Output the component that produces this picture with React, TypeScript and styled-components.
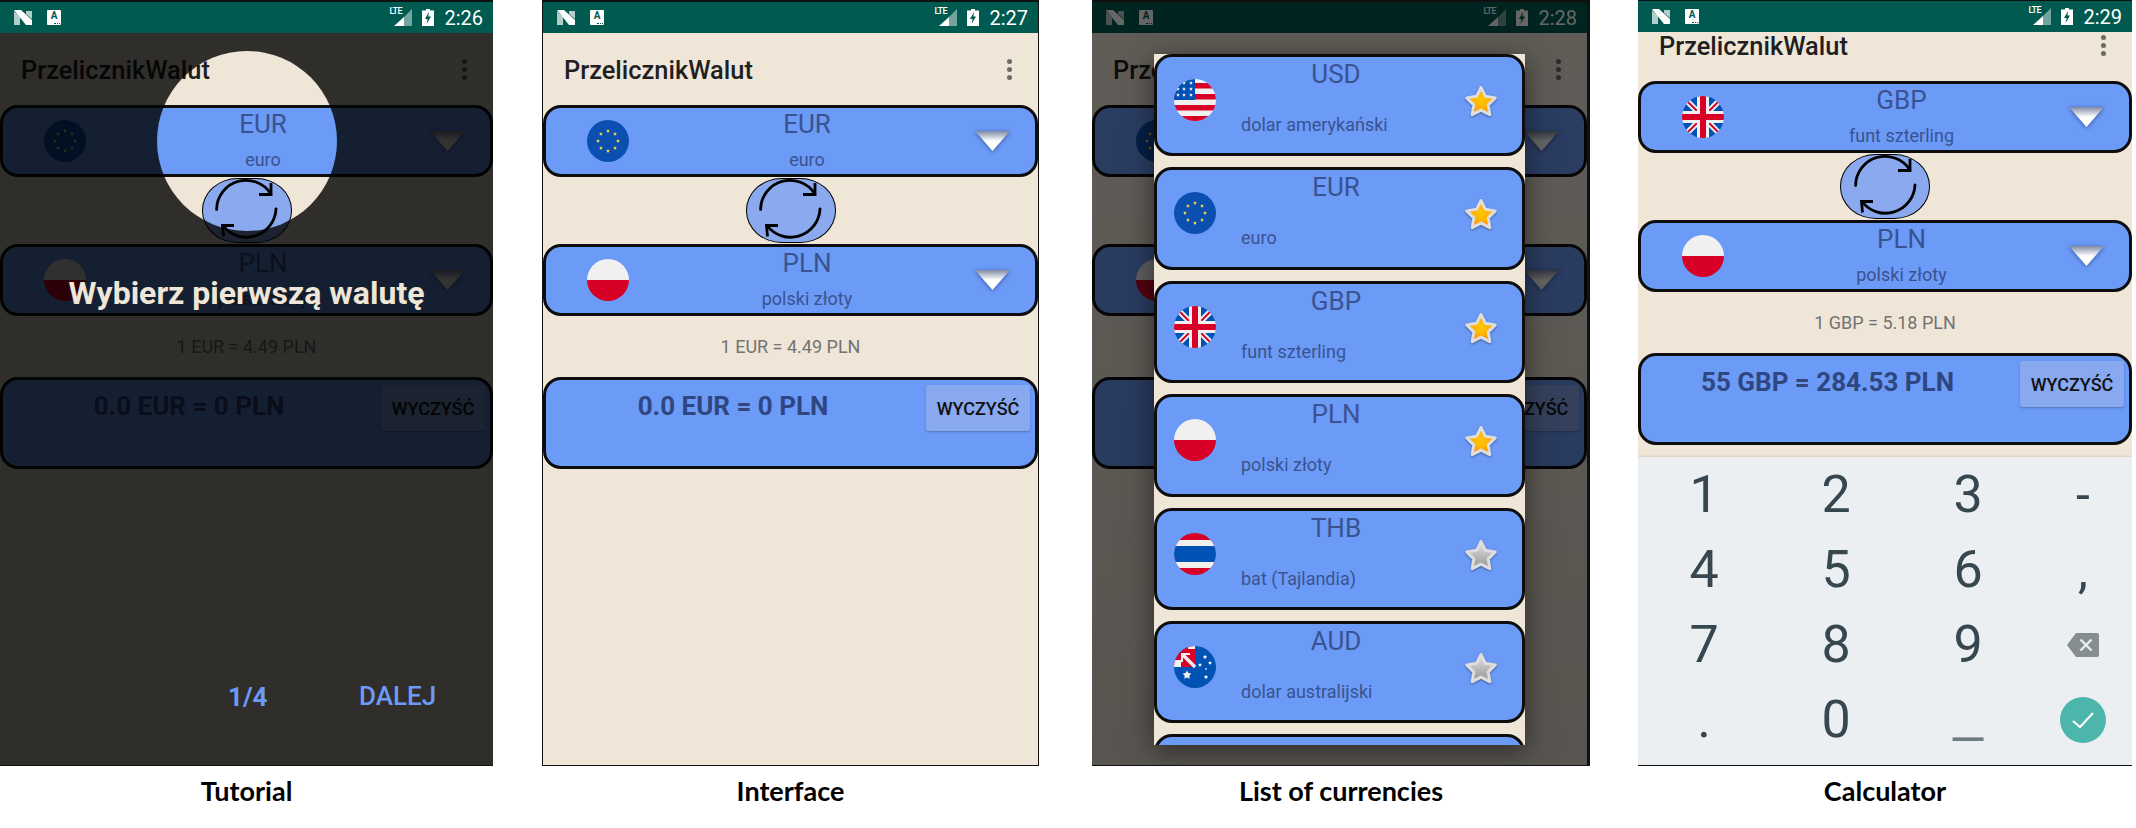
import React, { FC } from 'react';
import styled, { createGlobalStyle } from 'styled-components';

const BLUE = '#6b9af7';
const SAND = '#efe6d8';
const BAR = '#005a4f';
const INK = '#3a5390';

const GlobalStyle = createGlobalStyle`
  html, body {
    margin: 0;
    padding: 0;
    background: #fff;
  }
  * {
    box-sizing: border-box;
  }
`;

type FlagCode = 'EU' | 'PL' | 'GB' | 'US' | 'TH' | 'AU';

const starPoints = (cx: number, cy: number, outer: number, inner: number) =>
  Array.from({ length: 10 }, (_, i) => {
    const r = i % 2 ? inner : outer;
    const a = (Math.PI / 5) * i - Math.PI / 2;
    return `${(cx + r * Math.cos(a)).toFixed(2)},${(cy + r * Math.sin(a)).toFixed(2)}`;
  }).join(' ');

const FlagArt: FC<{ code: FlagCode }> = ({ code }) => {
  if (code === 'EU') {
    return (
      <svg viewBox="0 0 42 42" width="42" height="42">
        <rect width="42" height="42" fill="#0b4fb0" />
        {Array.from({ length: 8 }, (_, i) => {
          const a = (Math.PI / 4) * i;
          return (
            <polygon
              key={i}
              points={starPoints(21 + 10 * Math.sin(a), 21 - 10 * Math.cos(a), 2.1, 0.9)}
              fill="#ffda44"
            />
          );
        })}
      </svg>
    );
  }
  if (code === 'PL') {
    return (
      <svg viewBox="0 0 42 42" width="42" height="42">
        <rect width="42" height="21" fill="#f0f0f0" />
        <rect y="21" width="42" height="21" fill="#d80027" />
      </svg>
    );
  }
  if (code === 'GB') {
    return (
      <svg viewBox="0 0 42 42" width="42" height="42">
        <rect width="42" height="42" fill="#0052b4" />
        <path d="M4 4l34 34M38 4L4 38" stroke="#f0f0f0" strokeWidth="6" />
        <path d="M5 5l12 12M37 5L25 17M37 37L25 25M5 37l12-12" stroke="#d80027" strokeWidth="1.8" />
        <rect y="15" width="42" height="12" fill="#f0f0f0" />
        <rect x="15" width="12" height="42" fill="#f0f0f0" />
        <rect y="18" width="42" height="6" fill="#d80027" />
        <rect x="18" width="6" height="42" fill="#d80027" />
      </svg>
    );
  }
  if (code === 'US') {
    return (
      <svg viewBox="0 0 42 42" width="42" height="42">
        <rect width="42" height="42" fill="#f0f0f0" />
        {[4, 15, 26, 37].map((y) => (
          <rect key={y} y={y} width="42" height="5.5" fill="#d80027" />
        ))}
        <rect width="21" height="21" fill="#0052b4" />
        {[
          [10, 4],
          [17, 4],
          [4, 10],
          [10, 10],
          [17, 10],
          [4, 16],
          [10, 16],
          [17, 16],
        ].map(([x, y]) => (
          <polygon key={`${x}-${y}`} points={starPoints(x, y, 2, 0.9)} fill="#f0f0f0" />
        ))}
      </svg>
    );
  }
  if (code === 'TH') {
    return (
      <svg viewBox="0 0 42 42" width="42" height="42">
        <rect width="42" height="42" fill="#d80027" />
        <rect y="7" width="42" height="28" fill="#f0f0f0" />
        <rect y="13" width="42" height="16" fill="#0052b4" />
      </svg>
    );
  }
  return (
    <svg viewBox="0 0 42 42" width="42" height="42">
      <rect width="42" height="42" fill="#0052b4" />
      <rect width="21" height="21" fill="#d80027" />
      <rect y="14" width="7" height="7" fill="#f0f0f0" />
      <rect x="14" width="7" height="3" fill="#f0f0f0" />
      <path d="M9 9l12 12" stroke="#f0f0f0" strokeWidth="3.4" />
      <path d="M7 8h9M8 7v9" stroke="#f0f0f0" strokeWidth="2" />
      <polygon points={starPoints(13, 29, 4.6, 2.4)} fill="#f0f0f0" />
      {[
        [31, 11, 2.2],
        [36, 17, 2],
        [26, 19, 2],
        [32, 31, 2.2],
        [32, 23, 1.2],
      ].map(([x, y, r]) => (
        <polygon key={`${x}-${y}`} points={starPoints(x, y, r, r * 0.55)} fill="#f0f0f0" />
      ))}
    </svg>
  );
};

const NexusIcon = () => (
  <svg viewBox="0 0 18 15" width="18" height="15">
    <polygon points="0,1 6,7 6,15 0,15" fill="#fff" opacity="0.7" />
    <polygon points="0,0 7,0 18,10 18,15 12,15" fill="#fff" />
    <polygon points="12,1 18,1 18,9 12,4" fill="#fff" opacity="0.7" />
  </svg>
);

const SignalIcon = () => (
  <svg viewBox="0 0 18 17" width="18" height="17">
    <polygon points="0,17 10,17 10,8" fill="#fff" />
    <polygon points="10,8 18,0 18,17 10,17" fill="#fff" opacity="0.45" />
  </svg>
);

const BatteryIcon = () => (
  <svg viewBox="0 0 12 17" width="12" height="17">
    <path d="M4 0h4v1.5h4V17H0V1.5h4z" fill="#fff" />
    <polygon points="7,3 3,10 5.6,10 4.6,15 9,7.6 6.4,7.6" fill={BAR} />
  </svg>
);

const SwapIcon = () => (
  <SwapArt viewBox="0 0 89 65" width="89" height="65">
    <g fill="none" stroke="#000" strokeWidth="2.8">
      <path d="M14.6 31.5A29.5 29.5 0 0 1 69 16" strokeLinecap="round" />
      <path d="M69 5v11.5H57" />
      <path d="M74 31A29.5 29.5 0 0 1 21 47.5" strokeLinecap="round" />
      <path d="M32 47.5H20.5l1 11" />
    </g>
  </SwapArt>
);

const DropArrow = () => (
  <ArrowArt viewBox="0 0 37 25" width="37" height="25">
    <defs>
      <linearGradient id="arrowFill" x1="0" y1="0" x2="0" y2="1">
        <stop offset="0" stopColor="#7f8aa3" />
        <stop offset="0.5" stopColor="#fff" />
        <stop offset="1" stopColor="#fff" />
      </linearGradient>
    </defs>
    <polygon points="1,2 36,2 18.5,22" fill="url(#arrowFill)" />
  </ArrowArt>
);

const FavStar: FC<{ on?: boolean }> = ({ on }) => (
  <StarArt viewBox="0 0 36 34" width="36" height="34">
    <defs>
      <radialGradient id="starOn" cx="0.5" cy="0.45" r="0.6">
        <stop offset="0" stopColor="#ffc800" />
        <stop offset="0.55" stopColor="#ffb000" />
        <stop offset="1" stopColor="#ff6a00" />
      </radialGradient>
      <linearGradient id="starOff" x1="0" y1="0" x2="0" y2="1">
        <stop offset="0" stopColor="#e4e4e4" />
        <stop offset="1" stopColor="#949494" />
      </linearGradient>
    </defs>
    <polygon
      points={starPoints(18, 18.5, 15, 7.6)}
      fill={on ? 'url(#starOn)' : 'url(#starOff)'}
      stroke="#dedede"
      strokeWidth="3"
      strokeLinejoin="round"
    />
  </StarArt>
);

const StatusRow: FC<{ time: string }> = ({ time }) => (
  <StatusBar>
    <NexusIcon />
    <StoreIcon>A</StoreIcon>
    <StatusRight>
      <SignalWrap>
        <LteLabel>LTE</LteLabel>
        <SignalIcon />
      </SignalWrap>
      <BatteryIcon />
      <Clock>{time}</Clock>
    </StatusRight>
  </StatusBar>
);

const CurrencyCard: FC<{ flag: FlagCode; code: string; name: string }> = ({ flag, code, name }) => (
  <Card>
    <Flag>
      <FlagArt code={flag} />
    </Flag>
    <CardText>
      <Code>{code}</Code>
      <Name>{name}</Name>
    </CardText>
    <DropArrow />
  </Card>
);

type ConverterProps = {
  from: [FlagCode, string, string];
  rate: string;
  result: string;
  compact?: boolean;
};

const Converter: FC<ConverterProps> = ({ from, rate, result, compact }) => (
  <>
    <AppBar $compact={compact}>
      <Title>PrzelicznikWalut</Title>
      <Dots>
        <Dot />
        <Dot />
        <Dot />
      </Dots>
    </AppBar>
    <CurrencyCard flag={from[0]} code={from[1]} name={from[2]} />
    <SwapRow>
      <SwapButton>
        <SwapIcon />
      </SwapButton>
    </SwapRow>
    <CurrencyCard flag="PL" code="PLN" name="polski złoty" />
    <Rate>{rate}</Rate>
    <ResultCard>
      <ResultText>{result}</ResultText>
      <ClearButton>WYCZYŚĆ</ClearButton>
    </ResultCard>
  </>
);

const EUR: [FlagCode, string, string] = ['EU', 'EUR', 'euro'];
const GBP: [FlagCode, string, string] = ['GB', 'GBP', 'funt szterling'];

const currencies: { flag: FlagCode; code: string; name: string; fav: boolean }[] = [
  { flag: 'US', code: 'USD', name: 'dolar amerykański', fav: true },
  { flag: 'EU', code: 'EUR', name: 'euro', fav: true },
  { flag: 'GB', code: 'GBP', name: 'funt szterling', fav: true },
  { flag: 'PL', code: 'PLN', name: 'polski złoty', fav: true },
  { flag: 'TH', code: 'THB', name: 'bat (Tajlandia)', fav: false },
  { flag: 'AU', code: 'AUD', name: 'dolar australijski', fav: false },
];

const keys = ['1', '2', '3', '-', '4', '5', '6', ',', '7', '8', '9'];

const App: FC = () => (
  <Sheet>
    <GlobalStyle />

    <Column $left={0} $width={493}>
      <Screen>
        <StatusRow time="2:26" />
        <Body>
          <Converter from={EUR} rate="1 EUR = 4.49 PLN" result="0.0 EUR = 0 PLN" />
          <Spotlight />
          <Hint>Wybierz pierwszą walutę</Hint>
          <Pager>1/4</Pager>
          <NextLink>DALEJ</NextLink>
        </Body>
      </Screen>
      <Caption>Tutorial</Caption>
    </Column>

    <Column $left={49} $width={497}>
      <Screen $left={1} $right={1}>
        <StatusRow time="2:27" />
        <Body>
          <Converter from={EUR} rate="1 EUR = 4.49 PLN" result="0.0 EUR = 0 PLN" />
        </Body>
      </Screen>
      <Caption>Interface</Caption>
    </Column>

    <Column $left={53} $width={498}>
      <Screen $right={3}>
        <StatusRow time="2:28" />
        <Body>
          <Converter from={EUR} rate="1 EUR = 4.49 PLN" result="0.0 EUR = 0 PLN" />
        </Body>
        <Scrim />
        <Dialog>
          {currencies.map((c) => (
            <ListItem key={c.code}>
              <ListFlag>
                <FlagArt code={c.flag} />
              </ListFlag>
              <ListText>
                <ListCode>{c.code}</ListCode>
                <ListName>{c.name}</ListName>
              </ListText>
              <FavStar on={c.fav} />
            </ListItem>
          ))}
          <ListItem />
        </Dialog>
      </Screen>
      <Caption>List of currencies</Caption>
    </Column>

    <Column $left={48} $width={494}>
      <Screen $top={1}>
        <StatusRow time="2:29" />
        <Body>
          <Converter compact from={GBP} rate="1 GBP = 5.18 PLN" result="55 GBP = 284.53 PLN" />
          <Keyboard>
            {keys.map((k) => (
              <Key key={k} $size={k === '-' || k === ',' ? 50 : 52}>
                {k}
              </Key>
            ))}
            <Key>
              <svg viewBox="0 0 32 24" width="32" height="24">
                <path d="M9 0h21a2 2 0 0 1 2 2v20a2 2 0 0 1-2 2H9L0 12z" fill="#868e92" />
                <path d="M13.5 6.5l11 11M24.5 6.5l-11 11" stroke="#eceff1" strokeWidth="2.4" />
              </svg>
            </Key>
            <Key>.</Key>
            <Key>0</Key>
            <Underscore>_</Underscore>
            <Key>
              <DoneButton>
                <svg viewBox="0 0 24 20" width="24" height="20">
                  <path d="M2 11l7 6L22 3" fill="none" stroke="#fff" strokeWidth="2" />
                </svg>
              </DoneButton>
            </Key>
          </Keyboard>
        </Body>
      </Screen>
      <Caption>Calculator</Caption>
    </Column>
  </Sheet>
);

export default App;

const Sheet = styled.div`
  display: flex;
  width: 2136px;
  height: 828px;
  background: #fff;
  overflow: hidden;
  font-family: Roboto, 'Liberation Sans', sans-serif;
`;
const Column = styled.div<{ $left: number; $width: number }>`
  display: flex;
  flex-direction: column;
  flex: none;
  width: ${(p) => p.$width}px;
  margin-left: ${(p) => p.$left}px;
`;
const Screen = styled.div<{ $left?: number; $right?: number; $top?: number }>`
  position: relative;
  display: flex;
  flex-direction: column;
  height: 766px;
  overflow: hidden;
  border-style: solid;
  border-color: #111;
  border-width: ${(p) => p.$top ?? 2}px ${(p) => p.$right ?? 0}px 1px ${(p) => p.$left ?? 0}px;
`;
const Caption = styled.div`
  flex: 1;
  display: flex;
  align-items: center;
  justify-content: center;
  padding-bottom: 14px;
  font-family: Lato, 'Open Sans', sans-serif;
  font-weight: 700;
  font-size: 27px;
  color: #000;
`;
const StatusBar = styled.div`
  flex: none;
  display: flex;
  align-items: center;
  height: 31px;
  padding: 0 10px 0 14px;
  background: ${BAR};
`;
const StoreIcon = styled.div`
  position: relative;
  display: flex;
  justify-content: center;
  width: 14px;
  height: 15px;
  margin-left: 15px;
  border-radius: 1px;
  background: #fff;
  color: ${BAR};
  font-size: 10px;
  line-height: 12px;
  font-weight: 700;
  &::after {
    content: '';
    position: absolute;
    right: 1px;
    bottom: 1px;
    width: 6px;
    border-bottom: 1px dotted ${BAR};
  }
`;
const StatusRight = styled.div`
  display: flex;
  align-items: center;
  margin-left: auto;
  gap: 10px;
`;
const SignalWrap = styled.div`
  position: relative;
  display: flex;
`;
const LteLabel = styled.span`
  position: absolute;
  left: -5px;
  top: -3px;
  color: #fff;
  font-size: 9px;
  line-height: 10px;
  letter-spacing: -0.6px;
  font-weight: 500;
`;
const Clock = styled.span`
  color: #fff;
  font-size: 20px;
  line-height: 20px;
`;
const Body = styled.div`
  position: relative;
  flex: 1;
  display: flex;
  flex-direction: column;
  min-height: 0;
  overflow: hidden;
  background: ${SAND};
`;
const AppBar = styled.div<{ $compact?: boolean }>`
  flex: none;
  display: flex;
  justify-content: space-between;
  align-items: flex-start;
  height: ${(p) => (p.$compact ? 49 : 72)}px;
  padding: ${(p) => (p.$compact ? 0 : 23)}px 26px 0 21px;
`;
const Title = styled.div`
  font-size: 25.4px;
  line-height: 28px;
  font-weight: 500;
  color: #1f1f1f;
`;
const Dots = styled.div`
  display: flex;
  flex-direction: column;
  gap: 3px;
  padding-top: 3px;
`;
const Dot = styled.span`
  width: 5px;
  height: 5px;
  border-radius: 50%;
  background: #6a6a66;
`;
const Card = styled.div`
  flex: none;
  display: flex;
  align-items: center;
  height: 72px;
  padding: 0 24px 0 41px;
  border: 3px solid #0d0d0d;
  border-radius: 18px;
  background: ${BLUE};
`;
const Flag = styled.div`
  flex: none;
  width: 42px;
  height: 42px;
  border-radius: 50%;
  overflow: hidden;
  svg {
    display: block;
  }
`;
const CardText = styled.div`
  flex: 1;
  align-self: flex-start;
  display: flex;
  flex-direction: column;
  align-items: center;
  gap: 10px;
  padding: 1px 0 0 20px;
  margin-right: 9px;
  color: ${INK};
`;
const Code = styled.div`
  font-size: 26px;
  line-height: 30px;
`;
const Name = styled.div`
  font-size: 18px;
  line-height: 22px;
`;
const ArrowArt = styled.svg`
  flex: none;
  filter: drop-shadow(0 1px 2px rgba(20, 40, 100, 0.55));
`;
const SwapRow = styled.div`
  flex: none;
  display: flex;
  justify-content: center;
  align-items: center;
  height: 67px;
`;
const SwapButton = styled.div`
  width: 90px;
  height: 65px;
  border: 1px solid #000;
  border-radius: 36px / 32px;
  background: #8aa9ee;
  display: flex;
  align-items: center;
  justify-content: center;
`;
const SwapArt = styled.svg`
  flex: none;
`;
const Rate = styled.div`
  flex: none;
  height: 61px;
  display: flex;
  align-items: center;
  justify-content: center;
  font-size: 18px;
  color: #737373;
`;
const ResultCard = styled.div`
  flex: none;
  display: flex;
  align-items: flex-start;
  height: 92px;
  padding: 5px 5px 0 0;
  border: 3px solid #0d0d0d;
  border-radius: 18px;
  background: ${BLUE};
`;
const ResultText = styled.div`
  flex: 1;
  padding-right: 6px;
  text-align: center;
  font-size: 26px;
  line-height: 30px;
  font-weight: 700;
  color: #2f4680;
  margin-top: 6px;
`;
const ClearButton = styled.div`
  flex: none;
  display: flex;
  align-items: center;
  justify-content: center;
  width: 104px;
  height: 46px;
  border-radius: 2px;
  background: #88a8f0;
  box-shadow: 0 1px 2px rgba(0, 0, 0, 0.25);
  font-size: 18px;
  font-weight: 500;
  color: #111;
`;
const Spotlight = styled.div`
  position: absolute;
  left: 157px;
  top: 18px;
  width: 180px;
  height: 180px;
  border-radius: 50%;
  box-shadow: 0 0 0 1200px rgba(0, 0, 0, 0.8);
`;
const Hint = styled.div`
  position: absolute;
  left: 0;
  right: 0;
  top: 242px;
  text-align: center;
  font-size: 32px;
  line-height: 36px;
  font-weight: 700;
  color: ${SAND};
`;
const Pager = styled.div`
  position: absolute;
  left: 228px;
  top: 650px;
  font-size: 26px;
  line-height: 28px;
  font-weight: 700;
  color: ${BLUE};
`;
const NextLink = styled.div`
  position: absolute;
  left: 359px;
  top: 649px;
  font-size: 26px;
  line-height: 28px;
  font-weight: 500;
  color: ${BLUE};
`;
const Scrim = styled.div`
  position: absolute;
  inset: 0;
  background: linear-gradient(rgba(0, 0, 0, 0.6), rgba(0, 0, 0, 0.63));
`;
const Dialog = styled.div`
  position: absolute;
  left: 62px;
  top: 52px;
  width: 371px;
  height: 691px;
  display: flex;
  flex-direction: column;
  gap: 11px;
  overflow: hidden;
  background: ${SAND};
  box-shadow: 0 6px 26px rgba(0, 0, 0, 0.5);
`;
const ListItem = styled.div`
  flex: none;
  display: flex;
  align-items: flex-start;
  height: 102.4px;
  padding: 2px 23px 0 17px;
  border: 3px solid #0d0d0d;
  border-radius: 18px;
  background: ${BLUE};
`;
const ListFlag = styled(Flag)`
  margin-top: 20px;
`;
const ListText = styled.div`
  width: 190px;
  margin-left: 25px;
  color: ${INK};
  white-space: nowrap;
`;
const ListCode = styled.div`
  font-size: 26px;
  line-height: 30px;
  text-align: center;
`;
const ListName = styled.div`
  font-size: 18px;
  line-height: 22px;
  margin-top: 25px;
`;
const StarArt = styled.svg`
  flex: none;
  margin: 25px 0 0 auto;
  filter: drop-shadow(0 1px 1px rgba(0, 0, 0, 0.4));
`;
const Keyboard = styled.div`
  flex: 1;
  margin-top: 12px;
  display: grid;
  grid-template-columns: 132px 132px 132px 98px;
  grid-auto-rows: 75px;
  background: #eceff2;
  box-shadow: 0 -1px 2px rgba(0, 0, 0, 0.1);
`;
const Key = styled.div<{ $size?: number }>`
  display: flex;
  align-items: center;
  justify-content: center;
  color: #37474f;
  font-size: ${(p) => p.$size ?? 52}px;
  line-height: 1;
`;
const Underscore = styled(Key)`
  font-size: 72px;
  font-weight: 300;
  color: #6d7b83;
  padding-bottom: 14px;
`;
const DoneButton = styled.div`
  display: flex;
  align-items: center;
  justify-content: center;
  width: 46px;
  height: 46px;
  border-radius: 50%;
  background: #4db6ac;
`;
